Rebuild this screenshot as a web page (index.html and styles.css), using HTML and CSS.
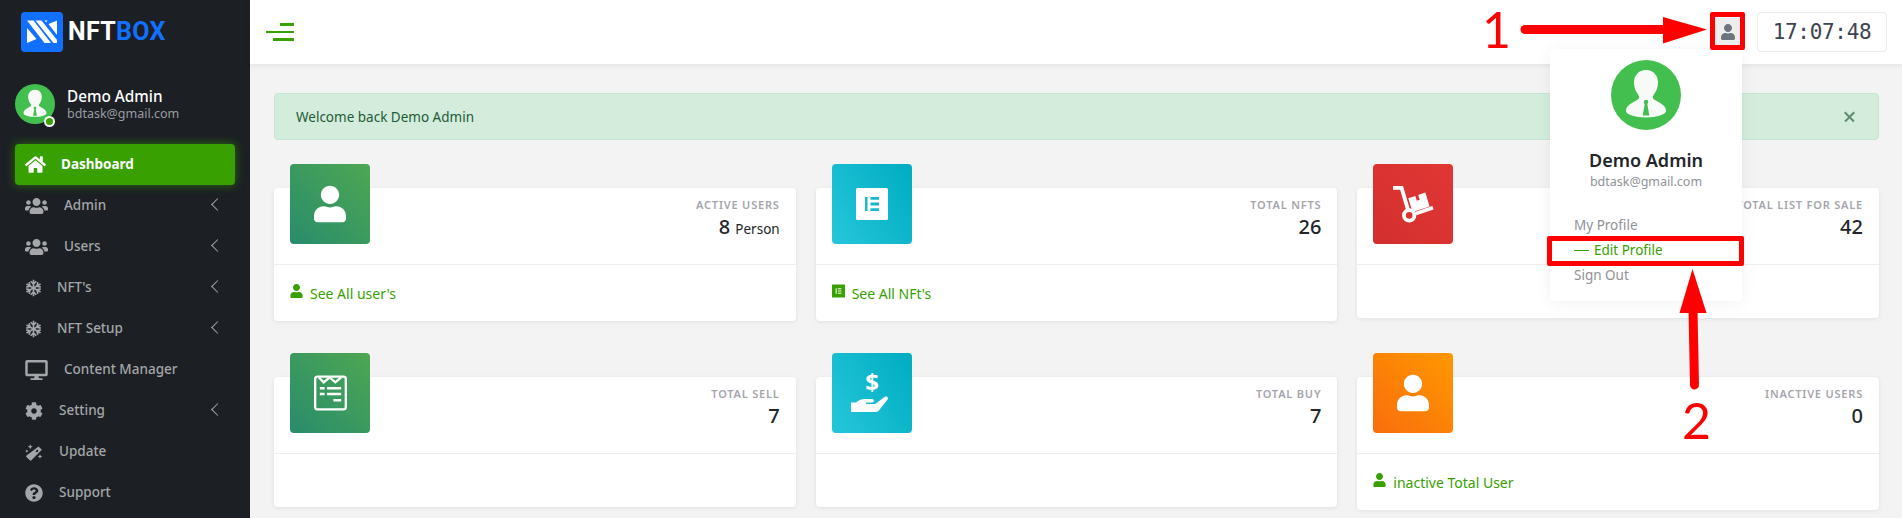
FILE: index.html
```html
<!DOCTYPE html>
<html lang="en">
<head>
<meta charset="utf-8">
<title>NFTBOX Dashboard</title>
<link rel="stylesheet" href="styles.css">
</head>
<body>
<svg class="defs" width="0" height="0">
  <symbol id="i-user" viewBox="0 0 448 512"><path d="M224 256c70.7 0 128-57.3 128-128S294.7 0 224 0 96 57.3 96 128s57.3 128 128 128zm89.6 32h-16.7c-22.2 10.2-46.9 16-72.9 16s-50.6-5.8-72.9-16h-16.7C60.2 288 0 348.2 0 422.4V464c0 26.5 21.5 48 48 48h352c26.5 0 48-21.5 48-48v-41.6c0-74.2-60.2-134.4-134.4-134.4z"/></symbol>
  <symbol id="i-home" viewBox="0 0 576 512"><path d="M280.37 148.26L96 300.11V464a16 16 0 0 0 16 16l112.06-.29a16 16 0 0 0 15.92-16V368a16 16 0 0 1 16-16h64a16 16 0 0 1 16 16v95.64a16 16 0 0 0 16 16.05L464 480a16 16 0 0 0 16-16V300L295.67 148.26a12.19 12.19 0 0 0-15.3 0zM571.6 251.47L488 182.56V44.05a12 12 0 0 0-12-12h-56a12 12 0 0 0-12 12v72.61L318.47 43a48 48 0 0 0-61 0L4.34 251.47a12 12 0 0 0-1.6 16.9l25.5 31A12 12 0 0 0 45.15 301l235.22-193.74a12.19 12.19 0 0 1 15.3 0L530.9 301a12 12 0 0 0 16.9-1.6l25.5-31a12 12 0 0 0-1.7-16.93z"/></symbol>
  <symbol id="i-users" viewBox="0 0 640 512"><path d="M96 224c35.3 0 64-28.7 64-64s-28.7-64-64-64-64 28.7-64 64 28.7 64 64 64zm448 0c35.3 0 64-28.7 64-64s-28.7-64-64-64-64 28.7-64 64 28.7 64 64 64zm32 32h-64c-17.6 0-33.5 7.1-45.1 18.6 40.3 22.1 68.9 62 75.1 109.4h66c17.7 0 32-14.3 32-32v-32c0-35.3-28.7-64-64-64zm-256 0c61.9 0 112-50.1 112-112S381.9 32 320 32 208 82.1 208 144s50.1 112 112 112zm76.8 32h-8.3c-20.8 10-43.9 16-68.5 16s-47.6-6-68.5-16h-8.3C179.6 288 128 339.6 128 403.2V432c0 26.5 21.5 48 48 48h288c26.5 0 48-21.5 48-48v-28.8c0-63.6-51.6-115.2-115.2-115.2zm-223.7-13.4C161.5 263.1 145.6 256 128 256H64c-35.3 0-64 28.7-64 64v32c0 17.7 14.3 32 32 32h65.9c6.3-47.4 34.9-87.3 75.2-109.4z"/></symbol>
  <symbol id="i-snow" viewBox="0 0 24 24"><g fill="none" stroke="currentColor" stroke-width="2.300"><path d="M12 .5v23M8 2.500L12 6.500l4-4M8 21.500L12 17.500l4 4"/><path d="M12 .5v23M8 2.500L12 6.500l4-4M8 21.500L12 17.500l4 4" transform="rotate(60 12 12)"/><path d="M12 .5v23M8 2.500L12 6.500l4-4M8 21.500L12 17.500l4 4" transform="rotate(120 12 12)"/></g></symbol>
  <symbol id="i-desktop" viewBox="0 0 576 512"><path d="M528 0H48C21.5 0 0 21.5 0 48v320c0 26.5 21.5 48 48 48h192l-16 48h-72c-13.3 0-24 10.7-24 24s10.7 24 24 24h272c13.3 0 24-10.7 24-24s-10.7-24-24-24h-72l-16-48h192c26.5 0 48-21.5 48-48V48c0-26.5-21.5-48-48-48zm-16 352H64V64h448v288z"/></symbol>
  <symbol id="i-cog" viewBox="0 0 512 512"><path d="M487.4 315.7l-42.6-24.6c4.3-23.2 4.3-47 0-70.2l42.6-24.6c4.9-2.8 7.1-8.6 5.5-14-11.1-35.6-30-67.8-54.7-94.6-3.8-4.1-10-5.1-14.8-2.3L380.8 110c-17.9-15.4-38.5-27.3-60.8-35.1V25.8c0-5.6-3.9-10.5-9.4-11.7-36.7-8.2-74.3-7.8-109.2 0-5.5 1.2-9.4 6.1-9.4 11.7V75c-22.2 7.9-42.8 19.8-60.8 35.1L88.7 85.5c-4.9-2.8-11-1.9-14.8 2.3-24.7 26.7-43.6 58.9-54.7 94.6-1.7 5.4.6 11.2 5.5 14L67.3 221c-4.3 23.2-4.3 47 0 70.2l-42.6 24.6c-4.9 2.8-7.1 8.6-5.5 14 11.1 35.6 30 67.8 54.7 94.6 3.8 4.1 10 5.1 14.8 2.3l42.6-24.6c17.9 15.4 38.5 27.3 60.8 35.1v49.2c0 5.6 3.9 10.5 9.4 11.7 36.7 8.2 74.3 7.8 109.2 0 5.5-1.2 9.4-6.1 9.4-11.7v-49.2c22.2-7.9 42.8-19.8 60.8-35.1l42.6 24.6c4.9 2.8 11 1.9 14.8-2.3 24.7-26.7 43.6-58.9 54.7-94.6 1.5-5.5-.7-11.3-5.6-14.1zM256 336c-44.1 0-80-35.9-80-80s35.9-80 80-80 80 35.9 80 80-35.9 80-80 80z"/></symbol>
  <symbol id="i-wand" viewBox="0 0 24 24"><path d="M18 4.500l4.500 4.500L8.500 23a1.500 1.500 0 0 1-2.100 0l-4.400-4.400a1.500 1.500 0 0 1 0-2.100z"/><path fill="#1c2024" d="M14 11l2.300-2.300 1.800 1.800-2.300 2.300z"/><path d="M7 1.500l1 2.400 2.400 1-2.400 1-1 2.400-1-2.400-2.400-1 2.400-1zM2.500 8.500l.7 1.600 1.600.7-1.600.7-.7 1.600-.7-1.600-1.600-.7 1.600-.7zM20 15l.9 2.100 2.100.9-2.100.9-.9 2.100-.9-2.100-2.100-.9 2.100-.9z"/></symbol>
  <symbol id="i-help" viewBox="0 0 512 512"><path d="M504 256c0 136.997-111.043 248-248 248S8 392.997 8 256C8 119.083 119.043 8 256 8s248 111.083 248 248zM262.655 90c-54.497 0-89.255 22.957-116.549 63.758-3.536 5.286-2.353 12.415 2.715 16.258l34.699 26.31c5.205 3.947 12.621 3.008 16.665-2.122 17.864-22.658 30.113-35.797 57.303-35.797 20.429 0 45.698 13.148 45.698 32.958 0 14.976-12.363 22.667-32.534 33.976C247.128 238.528 216 254.941 216 296v4c0 6.627 5.373 12 12 12h56c6.627 0 12-5.373 12-12v-1.333c0-28.462 83.186-29.647 83.186-106.667 0-58.002-60.165-102-116.531-102zM256 338c-25.365 0-46 20.635-46 46 0 25.364 20.635 46 46 46s46-20.636 46-46c0-25.365-20.635-46-46-46z"/></symbol>
  <symbol id="i-elementor" viewBox="0 0 32 32"><path fill-rule="evenodd" d="M1.500 0h29A1.500 1.500 0 0 1 32 1.500v29a1.500 1.500 0 0 1-1.500 1.500h-29A1.500 1.500 0 0 1 0 30.500v-29A1.500 1.500 0 0 1 1.500 0zM9 9v14h2.500V9zM14.500 9v2.800H23V9zM14.500 14.600v2.800H23v-2.800zM14.500 20.200V23H23v-2.800z"/></symbol>
  <symbol id="i-avatar" viewBox="0 0 70 70"><circle cx="35" cy="35" r="35" fill="#43bf50"/><path fill="#f7faf6" d="M35 10c-7.500 0-12 5.500-12 12.500 0 5 1.800 9.200 4.400 12.500 1.100 1.400 1 3.600-.6 4.500C20 43.500 15 45.500 15 51c0 3.500 9 6.500 20 6.500S55 54.500 55 51c0-5.500-5-7.500-11.800-11.500-1.600-.9-1.700-3.100-.6-4.500 2.600-3.300 4.400-7.500 4.400-12.500C47 15.500 42.500 10 35 10z"/><path fill="#43bf50" d="M33.400 40h3.200l.7 2.600-1 1.500 2 11.400h-6.600l2-11.400-1-1.500z"/></symbol>
</svg>

<div class="page">
  <aside class="sidebar">
    <div class="brand">
      <svg class="brand-mark" viewBox="0 0 42 40"><rect width="42" height="40" rx="4" fill="#1170ff"/><path fill="#fff" d="M6 8.500h6.500L30 31h-6.500zM14.500 8.500h6L36 28v3h-3.500zM6 16l9.500 11L6 31zM36 8.500V23l-8.500-11zM23.500 8.500h3l-1.500 2z"/></svg>
      <span class="brand-name">NFT<b>BOX</b></span>
    </div>
    <div class="me">
      <div class="me-pic"><svg class="me-avatar"><use href="#i-avatar"/></svg><span class="me-dot"></span></div>
      <div class="me-text">
        <div class="me-name">Demo Admin</div>
        <div class="me-mail">bdtask@gmail.com</div>
      </div>
    </div>
    <ul class="nav">
      <li class="nav-item active"><svg class="nav-icon ic-home"><use href="#i-home"/></svg><span>Dashboard</span></li>
      <li class="nav-item"><svg class="nav-icon ic-wide"><use href="#i-users"/></svg><span>Admin</span><i class="chev"></i></li>
      <li class="nav-item"><svg class="nav-icon ic-wide"><use href="#i-users"/></svg><span>Users</span><i class="chev"></i></li>
      <li class="nav-item"><svg class="nav-icon ic-snow"><use href="#i-snow"/></svg><span>NFT's</span><i class="chev"></i></li>
      <li class="nav-item"><svg class="nav-icon ic-snow"><use href="#i-snow"/></svg><span>NFT Setup</span><i class="chev"></i></li>
      <li class="nav-item"><svg class="nav-icon ic-wide"><use href="#i-desktop"/></svg><span>Content Manager</span></li>
      <li class="nav-item"><svg class="nav-icon ic-std"><use href="#i-cog"/></svg><span>Setting</span><i class="chev"></i></li>
      <li class="nav-item"><svg class="nav-icon ic-std"><use href="#i-wand"/></svg><span>Update</span></li>
      <li class="nav-item"><svg class="nav-icon ic-std"><use href="#i-help"/></svg><span>Support</span></li>
    </ul>
  </aside>

  <div class="main">
    <header class="topbar">
      <div class="burger"><span class="b1"></span><span class="b2"></span><span class="b3"></span></div>
      <div class="top-right">
        <div class="user-btn"><svg class="user-btn-icon"><use href="#i-user"/></svg></div>
        <div class="clock">17:07:48</div>
      </div>
    </header>

    <section class="content">
      <div class="alert"><span>Welcome back Demo Admin</span><span class="alert-x"></span></div>

      <div class="cards">
        <div class="card">
          <div class="card-body">
            <div class="card-icon green"><svg class="big-user"><use href="#i-user"/></svg></div>
            <div class="card-info"><div class="card-title">ACTIVE USERS</div><div class="card-num">8 <small>Person</small></div></div>
          </div>
          <div class="card-foot"><svg class="foot-icon"><use href="#i-user"/></svg><a>See All user's</a></div>
        </div>
        <div class="card">
          <div class="card-body">
            <div class="card-icon cyan"><svg class="big-el"><use href="#i-elementor"/></svg></div>
            <div class="card-info"><div class="card-title">TOTAL NFTS</div><div class="card-num">26</div></div>
          </div>
          <div class="card-foot"><svg class="foot-icon"><use href="#i-elementor"/></svg><a>See All NFt's</a></div>
        </div>
        <div class="card">
          <div class="card-body">
            <div class="card-icon red">
              <svg class="big-dolly" viewBox="0 0 44 40" fill="none" stroke="#fff" stroke-width="4"><path d="M1 3h9l7 24"/><circle cx="18" cy="32" r="5.500"/><path d="M25 30l18-6"/><path fill="#fff" stroke="none" d="M17 14l7.500-2.500 1.500 5 3-1-1.500-5 7.500-2.500 4.500 14.500-18 6z"/></svg>
            </div>
            <div class="card-info"><div class="card-title">TOTAL LIST FOR SALE</div><div class="card-num">42</div></div>
          </div>
          <div class="card-foot empty"></div>
        </div>
        <div class="card">
          <div class="card-body">
            <div class="card-icon green">
              <svg class="big-sell" viewBox="0 0 34 36" fill="none" stroke="#fff"><rect x="1.200" y="1.200" width="31.600" height="33.600" rx="2.500" stroke-width="2.400"/><path stroke-width="2.400" d="M5 2l5 5 6-5 6 5 6-5"/><path stroke-width="2.600" d="M6 13h5M13.500 13h14.500M6 19h5M13.500 19h14.500M20 25.500h8"/></svg>
            </div>
            <div class="card-info"><div class="card-title">TOTAL SELL</div><div class="card-num">7</div></div>
          </div>
          <div class="card-foot empty"></div>
        </div>
        <div class="card">
          <div class="card-body">
            <div class="card-icon cyan">
              <svg class="big-hand" viewBox="0 0 42 40"><text x="21" y="18" text-anchor="middle" class="dollar">$</text><path fill="#fff" d="M0 29.500h5c3-3 6-3.500 9-3.500h7c2.500 0 2.500 3.500 0 3.500h-6v1.500h8c1 0 1.800-.4 2.500-1l8-6c2.400-1.700 4.800 1.300 2.500 3.300L27.500 38c-.8.700-1.800 1-2.800 1H0z"/></svg>
            </div>
            <div class="card-info"><div class="card-title">TOTAL BUY</div><div class="card-num">7</div></div>
          </div>
          <div class="card-foot empty"></div>
        </div>
        <div class="card">
          <div class="card-body">
            <div class="card-icon orange"><svg class="big-user"><use href="#i-user"/></svg></div>
            <div class="card-info"><div class="card-title">INACTIVE USERS</div><div class="card-num">0</div></div>
          </div>
          <div class="card-foot"><svg class="foot-icon"><use href="#i-user"/></svg><a>inactive Total User</a></div>
        </div>
      </div>
    </section>
  </div>

  <div class="profile-menu">
    <svg class="profile-pic"><use href="#i-avatar"/></svg>
    <div class="profile-name">Demo Admin</div>
    <div class="profile-mail">bdtask@gmail.com</div>
    <ul class="profile-links">
      <li>My Profile</li>
      <li class="on"><span class="dash"></span>Edit Profile</li>
      <li>Sign Out</li>
    </ul>
  </div>

  <svg class="marks" width="1902" height="518" viewBox="0 0 1902 518">
    <path d="M1525 29.500H1664" stroke="#f00" stroke-width="9" stroke-linecap="round"/>
    <path d="M1663 17l44 12.500-44 14z" fill="#f00"/>
    <path d="M1694.500 385L1693 310" stroke="#f00" stroke-width="9" stroke-linecap="round"/>
    <path d="M1692.500 269l14 44h-27z" fill="#f00"/>
  </svg>
  <div class="hl hl-user"></div>
  <div class="hl hl-edit"></div>
  <div class="num num-1">1</div>
  <div class="num num-2">2</div>
</div>
</body>
</html>
```

FILE: styles.css
```css
*{box-sizing:border-box;}
html,body{margin:0;padding:0;height:100%;overflow:hidden;}
body{background:#f3f3f3;font:14px/20px "Noto Sans",Arial,sans-serif;color:#22252a;}
ul{list-style:none;margin:0;padding:0;}
.defs{position:absolute;}
.page{position:relative;display:flex;width:1902px;height:518px;overflow:hidden;}

/* sidebar */
.sidebar{width:250px;flex:none;background:#1c2024;padding:12px 15px 0;}
.brand{display:flex;align-items:center;height:40px;margin-left:6px;}
.brand-mark{width:42px;height:40px;flex:none;}
.brand-name{margin-left:5px;font:700 25px/40px Roboto,Inter,sans-serif;color:#fff;letter-spacing:.3px;}
.brand-name b{color:#1170ff;font-weight:700;}
.me{display:flex;align-items:center;margin-top:32px;height:40px;}
.me-pic{position:relative;width:40px;height:40px;flex:none;}
.me-avatar{width:40px;height:40px;display:block;}
.me-dot{position:absolute;left:29px;top:32px;width:11px;height:11px;border-radius:50%;background:#38a000;border:2px solid #fff;}
.me-text{margin-left:12px;}
.me-name{font-size:15.300px;line-height:20px;font-weight:500;color:#fff;}
.me-mail{font-size:12.500px;line-height:16px;color:#9a9ca0;}
.nav{margin-top:20px;}
.nav-item{display:flex;align-items:center;height:41px;padding:0 13px 2px 10px;color:#a4a6a9;font-size:13.500px;font-weight:500;}
.nav-item.active{background:#38a000;color:#fff;border-radius:4px;font-weight:700;box-shadow:0 0 10px rgba(56,160,0,.6);}
.nav-item svg{fill:currentColor;color:inherit;flex:none;margin-top:2px;}
.ic-home{width:21px;height:19px;margin-right:15px;}
.ic-wide{width:23px;height:20px;margin-right:16px;}
.ic-snow{width:17px;height:18px;margin-right:15px;}
.ic-std{width:18px;height:18px;margin-right:16px;}
.chev{margin-left:auto;width:9px;height:9px;border-left:1px solid #a4a6a9;border-bottom:1px solid #a4a6a9;transform:rotate(45deg);}

/* top bar */
.main{flex:1;min-width:0;}
.topbar{height:64px;background:#fff;box-shadow:0 1px 6px rgba(0,0,0,.08);display:flex;align-items:center;justify-content:space-between;padding:0 15px 0 16px;}
.burger{display:flex;flex-direction:column;align-items:flex-end;gap:5px;width:28px;}
.burger span{display:block;height:2.500px;background:#38a000;}
.b1{width:14px;}
.b2{width:28px;}
.b3{width:21px;}
.top-right{display:flex;align-items:center;gap:17px;}
.user-btn{width:25px;height:28px;background:#eee;display:flex;align-items:center;justify-content:center;}
.user-btn-icon{width:14px;height:16px;fill:#6c757d;}
.clock{width:130px;height:40px;border:1px solid #ececec;border-radius:4px;text-align:center;font:400 21px/38px "DejaVu Sans Mono","Liberation Mono",monospace;letter-spacing:-.3px;color:#3c4450;}

/* content */
.content{padding:29px 23px 0 24px;}
.alert{height:47px;display:flex;align-items:center;justify-content:space-between;padding:0 24px 0 21px;background:#d4ecdc;border:1px solid #c6e6d1;border-radius:4px;color:#1c5c36;font-size:13.500px;}
.alert-x{position:relative;width:10px;height:10px;}
.alert-x:before,.alert-x:after{content:"";position:absolute;left:-1px;top:4px;width:13px;height:1.500px;background:#5f8c70;transform:rotate(45deg);}
.alert-x:after{transform:rotate(-45deg);}
.cards{display:grid;grid-template-columns:repeat(3,1fr);column-gap:20px;row-gap:56px;margin-top:48px;align-items:start;}
.card{background:#fff;border-radius:4px;box-shadow:0 1px 4px rgba(0,0,0,.08);}
.card-body{display:flex;justify-content:space-between;height:77px;padding:0 16px;border-bottom:1px solid #eee;}
.card-icon{width:80px;height:80px;margin-top:-24px;border-radius:4px;display:flex;align-items:center;justify-content:center;flex:none;}
.green{background:linear-gradient(45deg,#288c6c,#4ea752);}
.cyan{background:linear-gradient(60deg,#26c6da,#00acc1);}
.red{background:linear-gradient(45deg,#d32f2f,#e53935 130%);}
.orange{background:linear-gradient(45deg,#f96d0d,#ff9800);}
.big-user{width:32px;height:38px;fill:#fff;}
.big-el{width:32px;height:34px;fill:#fff;}
.big-dolly{width:42px;height:38px;}
.big-sell{width:33px;height:36px;}
.big-hand{width:42px;height:42px;}
.dollar{fill:#fff;font:700 24px "Noto Sans",sans-serif;}
.card-info{padding-top:7px;text-align:right;}
.card-title{font-size:11px;line-height:19px;font-weight:600;letter-spacing:.8px;color:#a5a5ad;}
.card-num{font-size:20px;line-height:26px;font-weight:500;color:#22252a;}
.card-num small{font-size:13.500px;font-weight:400;}
.card-foot{height:56px;padding:18px 16px 0;display:flex;align-items:flex-start;}
.card-foot.empty{height:53px;}
.card-foot a{color:#38a000;font-size:14px;line-height:22px;margin-left:7px;}
.foot-icon{width:13px;height:14px;fill:#38a000;flex:none;margin-top:1px;}

/* profile dropdown */
.profile-menu{position:absolute;left:1550px;top:49px;width:192px;height:252px;background:#fff;border-radius:4px;box-shadow:0 2px 16px rgba(0,0,0,.06);padding-top:11px;text-align:center;}
.profile-pic{display:block;width:70px;height:70px;margin:0 auto;}
.profile-name{margin-top:18px;font-size:18px;line-height:24px;font-weight:600;color:#22252a;}
.profile-mail{margin-top:1px;font-size:12.500px;line-height:18px;color:#8f9297;}
.profile-links{margin-top:22px;padding-left:24px;text-align:left;color:#8f9297;font-size:13.500px;}
.profile-links li{height:25px;line-height:25px;display:flex;align-items:center;}
.profile-links .on{color:#38a000;}
.dash{display:block;width:15px;height:1px;background:#38a000;margin-right:5px;}

/* red annotations over the screenshot */
.marks{position:absolute;left:0;top:0;pointer-events:none;}
.hl{position:absolute;border:5px solid #f00;border-radius:2px;}
.hl-user{left:1710px;top:12px;width:35px;height:38px;}
.hl-edit{left:1547px;top:236px;width:197px;height:30px;}
.num{position:absolute;font:400 50px/50px Lato,sans-serif;color:#f00;}
.num-1{left:1482px;top:4px;}
.num-2{left:1682px;top:395px;}
```
